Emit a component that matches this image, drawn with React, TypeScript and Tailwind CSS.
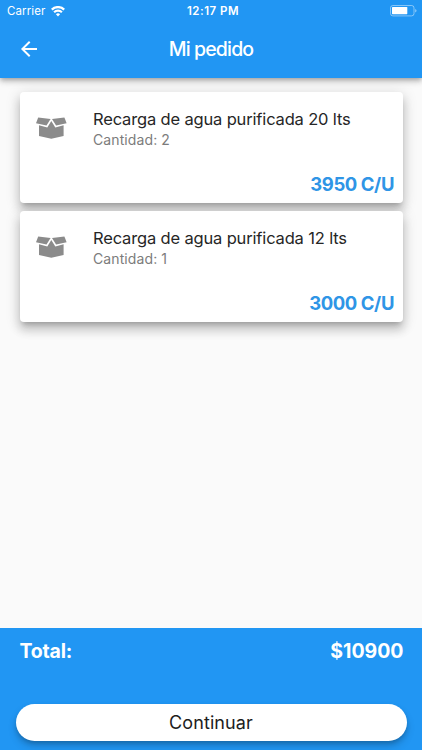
import { MdArrowBack } from 'react-icons/md';

const items = [
  { name: 'Recarga de agua purificada 20 lts', quantity: 2, price: 3950 },
  { name: 'Recarga de agua purificada 12 lts', quantity: 1, price: 3000 },
];

function StatusBar() {
  return (
    <div className="grid h-[22px] grid-cols-3 items-center pl-[7px] pr-[5px] text-[11.5px] leading-none">
      <div className="flex items-center gap-[6px]">
        <span className="pt-px tracking-[0.1px]">Carrier</span>
        <svg className="h-[11px] w-[14px]" viewBox="0 0 14 11" fill="none" stroke="currentColor" strokeWidth="2.2">
          <path d="M0.8 3.6a8.8 8.8 0 0 1 12.4 0" />
          <path d="M3.1 6.2a5.5 5.5 0 0 1 7.8 0" />
          <path d="M7 10.4 4.9 8.3a3 3 0 0 1 4.2 0z" fill="currentColor" stroke="none" />
        </svg>
      </div>
      <span className="pl-[2px] pt-px text-center font-semibold tracking-[0.5px]">12:17 PM</span>
      <svg className="h-[12px] w-[27px] justify-self-end" viewBox="0 0 27 12" fill="none">
        <rect x="0.5" y="0.5" width="23.5" height="10.4" rx="2.4" stroke="white" strokeOpacity="0.45" />
        <rect x="2" y="2" width="15.3" height="7.2" rx="0.6" fill="white" />
        <path d="M25.2 3.9c1.8.6 1.8 3 0 3.6z" fill="white" fillOpacity="0.5" />
      </svg>
    </div>
  );
}

function BoxIcon() {
  return (
    <svg className="mt-[9px] h-[22px] w-[31px] text-[#8b8b8b]" viewBox="0 0 31 22" fill="currentColor">
      <path d="M2.2 0.6 14.6 2 10.5 8.4 0 6.2z" />
      <path d="M28.4 0.6 16 2 20.1 8.4 30.6 6.2z" />
      <path d="M3 8.3 11.3 10.4 15.3 4 19.3 10.4 27.6 8.3V18.9L15.3 21.8 3 18.9z" />
    </svg>
  );
}

function OrderCard({ name, quantity, price }: (typeof items)[number]) {
  return (
    <article className="flex h-[111px] flex-col justify-between rounded-[4px] bg-white shadow-[0_5px_5px_-3px_rgba(0,0,0,0.2),0_8px_10px_1px_rgba(0,0,0,0.14),0_3px_14px_2px_rgba(0,0,0,0.12)]">
      <div className="flex pl-4 pt-[16px]">
        <BoxIcon />
        <div className="ml-[26px]">
          <h2 className="text-[16.5px] leading-[22px] tracking-[-0.16px] text-[#262626]">{name}</h2>
          <p className="text-[14px] leading-[20px] tracking-[0.1px] text-[#7c7c7c]">Cantidad: {quantity}</p>
        </div>
      </div>
      <p className="pb-[7px] pr-[9px] text-right text-[18.5px] font-bold leading-[24px] tracking-[-0.42px] text-[#2f95e6]">
        {price} C/U
      </p>
    </article>
  );
}

export default function App() {
  return (
    <main className="flex h-[750px] w-[422px] flex-col overflow-hidden bg-[#fafafa] font-['Inter',sans-serif]">
      <header className="z-10 h-[78px] bg-[#2196f3] text-white shadow-[0_2px_4px_-1px_rgba(0,0,0,0.2),0_4px_5px_rgba(0,0,0,0.14),0_1px_10px_rgba(0,0,0,0.12)]">
        <StatusBar />
        <div className="grid h-[54px] grid-cols-[58px_1fr_58px] items-center">
          <MdArrowBack className="ml-[17px] size-6" />
          <h1 className="pt-[2px] text-center text-[19.5px] font-medium leading-none tracking-[-0.85px]">Mi pedido</h1>
        </div>
      </header>

      <section className="flex grow flex-col gap-2 pl-[20px] pr-[19px] pt-[14px]">
        {items.map((item) => (
          <OrderCard key={item.name} {...item} />
        ))}
      </section>

      <footer className="flex h-[122.5px] flex-col justify-between bg-[#2196f3] px-[15.5px] pb-[9px] pt-[11px]">
        <div className="flex justify-between pl-1 pr-[3px] text-[19.5px] font-bold leading-[24px] text-white">
          <span className="tracking-[-0.2px]">Total:</span>
          <span>$10900</span>
        </div>
        <button className="h-[37px] rounded-full bg-white text-[18px] tracking-[0.1px] text-[#1d1d1d] shadow-[0_3px_5px_-1px_rgba(0,0,0,0.2),0_5px_8px_rgba(0,0,0,0.16)]">
          Continuar
        </button>
      </footer>
    </main>
  );
}
